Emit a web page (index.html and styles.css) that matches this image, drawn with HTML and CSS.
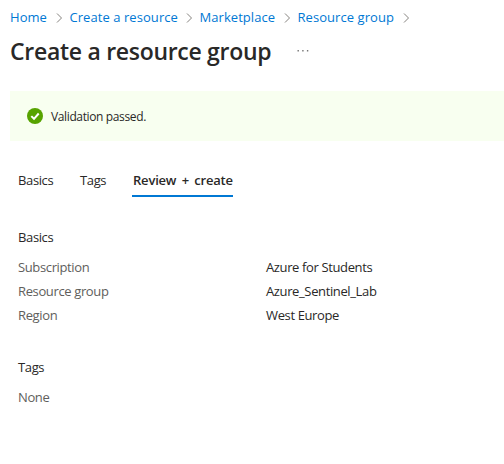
FILE: index.html
```html
<!DOCTYPE html>
<html lang="en">
<head>
<meta charset="utf-8">
<title>Create a resource group</title>
<link rel="stylesheet" href="styles.css">
</head>
<body>
<nav class="crumbs">
<a class="c1">Home</a><svg class="chev" viewBox="0 0 7 10"><path d="M1 .5 5.5 5 1 9.5"/></svg>
<a class="c2">Create a resource</a><svg class="chev" viewBox="0 0 7 10"><path d="M1 .5 5.5 5 1 9.5"/></svg>
<a class="c3">Marketplace</a><svg class="chev" viewBox="0 0 7 10"><path d="M1 .5 5.5 5 1 9.5"/></svg>
<a class="c4">Resource group</a><svg class="chev" viewBox="0 0 7 10"><path d="M1 .5 5.5 5 1 9.5"/></svg>
</nav>
<header class="head"><h1>Create a resource group</h1><svg class="more" viewBox="0 0 12 2"><path d="M.5 0h1.4v1.5H.5zM5.2 0h1.4v1.5H5.2zM9.9 0h1.4v1.5H9.9z"/></svg></header>
<div class="banner"><svg class="ok" viewBox="0 0 16 16"><circle cx="8" cy="8" r="8"/><path d="M4.3 8.1 7 10.8l4.7-5.3"/></svg><span class="valid">Validation passed.</span></div>
<div class="tabs"><span class="t1">Basics</span><span class="t2">Tags</span><span class="t3">Review + create</span></div>
<main>
<h2>Basics</h2>
<dl>
<dt>Subscription</dt><dd>Azure for Students</dd>
<dt>Resource group</dt><dd>Azure_Sentinel_Lab</dd>
<dt>Region</dt><dd>West Europe</dd>
</dl>
<h2>Tags</h2>
<p>None</p>
</main>
</body>
</html>
```
FILE: styles.css
```css
* { box-sizing: border-box; }
body { margin: 0; background: #fff; color: #292827; font: 13px/24px "Open Sans", "Noto Sans", sans-serif; white-space: nowrap; overflow: hidden; letter-spacing: -0.37px; }
.crumbs { display: flex; align-items: center; height: 34px; padding-left: 10px; color: #0078d4; letter-spacing: 0.06px; }
.crumbs a { flex: none; }
.c1 { width: 38px; }
.c2 { width: 108px; }
.c3 { width: 76px; }
.c4 { width: 97px; }
.chev { flex: none; width: 7px; height: 10px; margin: 2px 7px 0 8px; fill: none; stroke: #85827f; }
.c1 + .chev { margin-left: 7.5px; }
.head { display: flex; align-items: center; height: 34px; padding-left: 10px; }
h1 { margin: 0; width: 287px; font-size: 23px; line-height: 34px; font-weight: 600; letter-spacing: -0.29px; }
.more { width: 12px; height: 2px; fill: #777; }
.banner { display: flex; align-items: center; gap: 8px; height: 50px; margin: 23px 0 0 10px; padding-left: 17px; background: #f8fff0; font-size: 12px; }
.valid { padding-top: 2px; }
.ok { width: 16px; height: 16px; fill: #57a300; }
.ok path { fill: none; stroke: #fff; stroke-width: 2; }
.tabs { display: flex; height: 56px; padding: 27px 0 0 18px; }
.t1 { width: 62px; }
.t2 { width: 52px; }
.t3 { width: 101px; height: 29px; padding-left: 1px; font-weight: 600; letter-spacing: -0.2px; word-spacing: 2.2px; border-bottom: 2px solid #0078d4; }
main { padding: 28px 0 0 18px; }
h2 { margin: 0 0 6px; font-size: 13px; line-height: 24px; font-weight: 400; }
dl { display: grid; grid-template-columns: 248px 1fr; margin: 0 0 28px; }
dt, p { color: #605e5c; }
dd, p { margin: 0; }
```
